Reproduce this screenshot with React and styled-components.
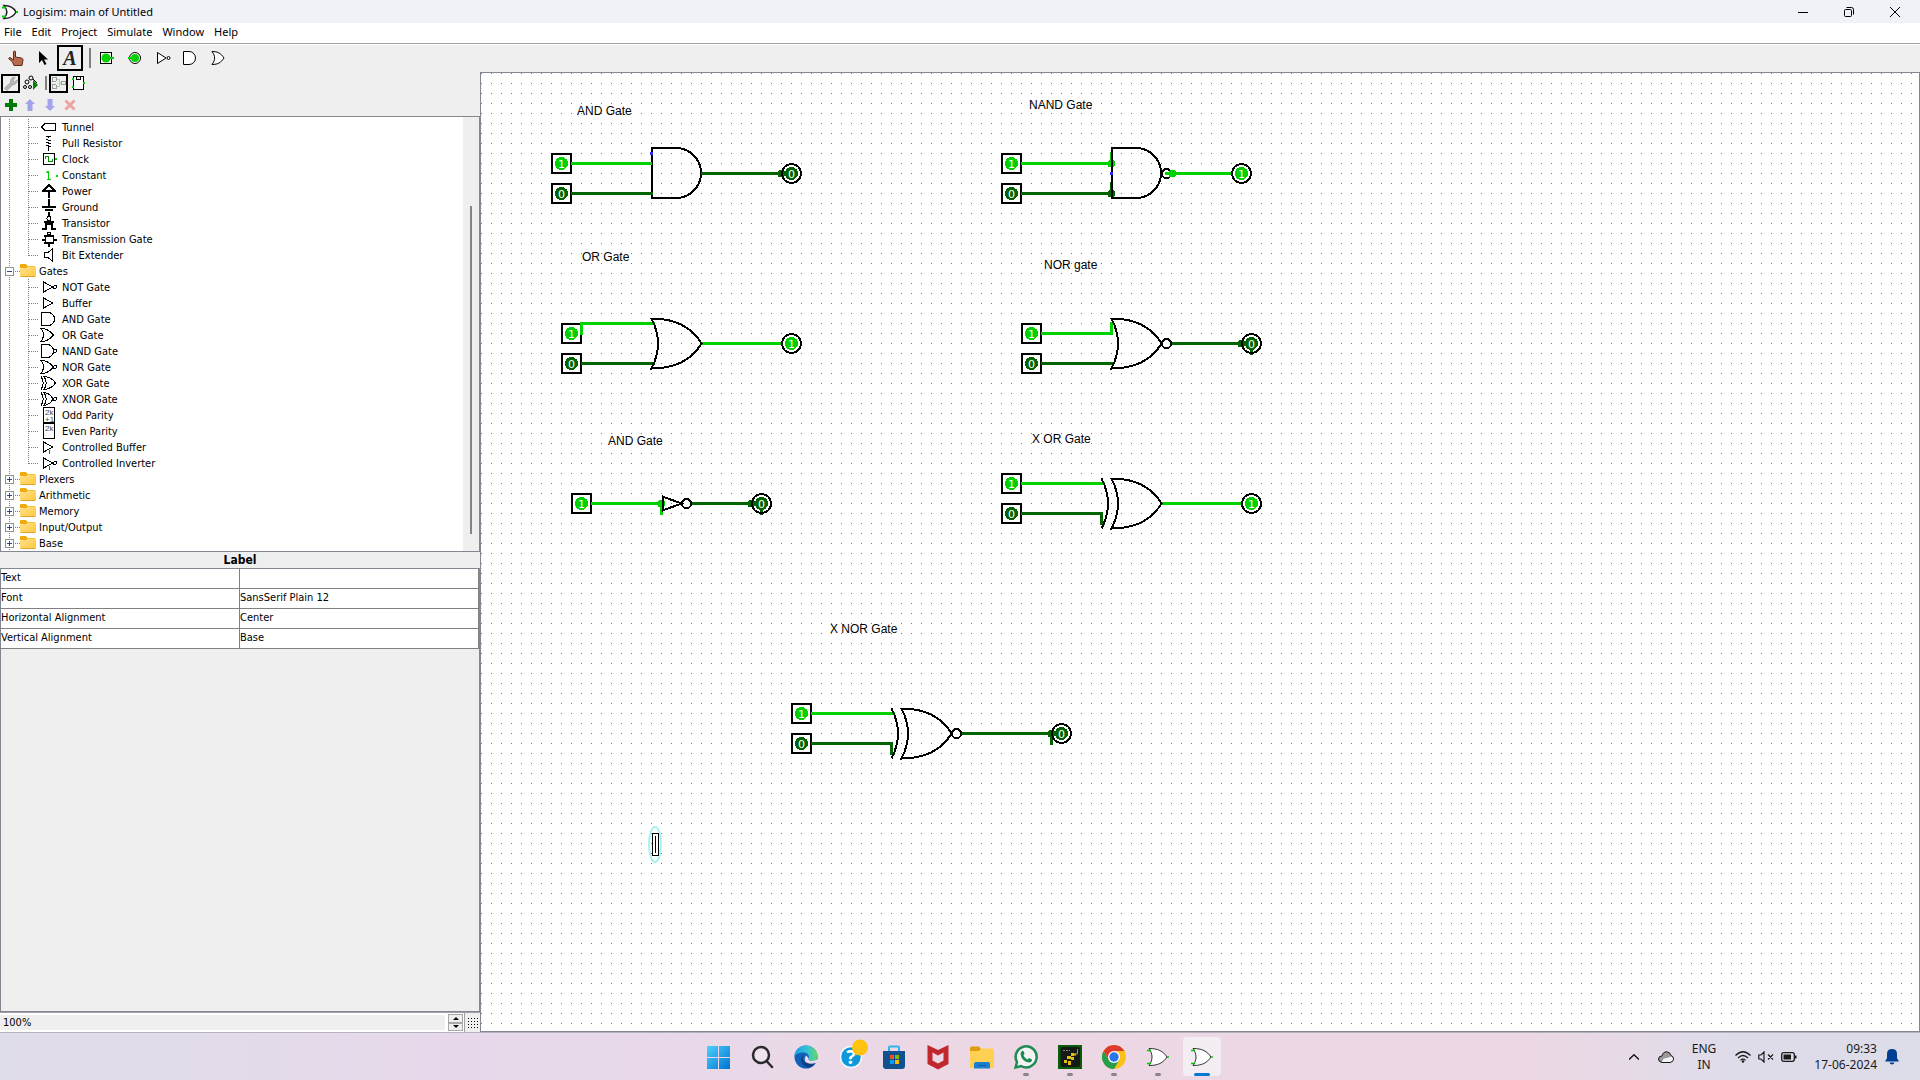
import React, { useState } from "react";
import styled, { createGlobalStyle } from "styled-components";

const ON = "#00d200";
const OFF = "#006400";
const FACE = "#efefef";
const EDGE = "#828790";
const UI_FONT = '"Noto Sans", "Open Sans", sans-serif';
const SWING_FONT = '"DejaVu Sans Condensed", "DejaVu Sans", sans-serif';

const GlobalStyle = createGlobalStyle`
  * { box-sizing: border-box; }
  html, body, #root { height: 100%; }
  body { margin: 0; overflow: hidden; background: ${FACE}; color: #000; font: 11px ${UI_FONT}; }
  button { font: inherit; color: inherit; border: 0; padding: 0; background: none; }
  svg { display: block; flex: none; }
`;

/* ---------- frame ---------- */

const Desktop = styled.div`
  height: 100%;
  display: flex;
  flex-direction: column;
`;

const TitleBar = styled.header`
  display: flex;
  align-items: center;
  height: 23px;
  padding: 0 2px;
  background: #f1f1f8;
`;

const Title = styled.h1`
  flex: 1;
  margin: 0 0 0 5px;
  font-size: 11px;
  line-height: 16px;
  font-weight: 400;
`;

const WindowButton = styled.button`
  display: grid;
  place-items: center;
  width: 46px;
  height: 20px;
`;

const MenuBar = styled.nav`
  display: flex;
  align-items: flex-start;
  gap: 10px;
  height: 21px;
  padding: 0 4px;
  background: #fff;
  border-bottom: 1px solid #a0a0a0;
`;

const MenuButton = styled.button`
  line-height: 18px;
`;

const ToolBar = styled.div`
  display: flex;
  align-items: center;
  height: 28px;
  padding: 0 3px;
  background: ${FACE};
  box-shadow: inset 0 1px #fff;
`;

const Tool = styled.button`
  display: grid;
  place-items: center;
  width: ${(p) => p.$size}px;
  height: ${(p) => p.$size}px;
  border: 2px solid ${(p) => (p.$selected ? "#000" : "transparent")};
`;

const Separator = styled.span`
  width: 2px;
  height: ${(p) => p.$height}px;
  margin: 0 ${(p) => p.$right}px 0 ${(p) => p.$left}px;
  background: #808080;
`;

const Workspace = styled.main`
  flex: 1;
  min-height: 0;
  display: flex;
`;

const SidePane = styled.aside`
  flex: none;
  width: 480px;
  display: flex;
  flex-direction: column;
  background: ${FACE};
`;

const PaneTools = styled.div`
  display: flex;
  align-items: center;
  height: 22px;
  padding: 0 1px;
`;

/* ---------- library tree ---------- */

const TreeFrame = styled.div`
  display: flex;
  height: 436px;
  border: 1px solid ${EDGE};
  background: #fff;
`;

const TreeList = styled.ul`
  flex: 1;
  margin: 0;
  padding: 2px 0 0;
  list-style: none;
  font: 11px/16px ${SWING_FONT};
`;

const TreeRow = styled.li`
  display: flex;
  height: 16px;
  padding-left: 4px;
`;

const TreeLabel = styled.span`
  padding-top: 1px;
  margin-left: ${(p) => (p.$folder ? 3 : 5)}px;
`;

const ScrollTrack = styled.div`
  display: flex;
  justify-content: center;
  width: 16px;
  padding-top: 89px;
  background: ${FACE};
`;

const ScrollThumb = styled.div`
  width: 2px;
  height: 328px;
  background: #858585;
`;

/* ---------- attributes ---------- */

const PanelTitle = styled.h2`
  margin: 0;
  padding-top: 1px;
  font: 700 12px/15px ${SWING_FONT};
  text-align: center;
`;

const AttributeArea = styled.div`
  flex: 1;
  border: 1px solid ${EDGE};
`;

const AttributeTable = styled.table`
  width: 100%;
  table-layout: fixed;
  border-collapse: separate;
  border-spacing: 0;
  background: #fff;
  font: 11px/18px ${SWING_FONT};

  th, td {
    height: 20px;
    padding: 0 0 1px;
    font-weight: 400;
    text-align: left;
    border-right: 1px solid #808080;
    border-bottom: 1px solid #808080;
  }
`;

const ZoomRow = styled.div`
  display: flex;
  height: 20px;
  border-top: 1px solid #a0a0a8;
`;

const ZoomField = styled.input`
  flex: 1;
  min-width: 0;
  padding: 0 3px;
  border: 2px solid #fff;
  border-left: 0;
  background: ${FACE};
  font: 11px ${SWING_FONT};
`;

const Spinner = styled.div`
  display: flex;
  flex-direction: column;
  width: 18px;
  padding: 1px;
  background: #fff;
  border-right: 1px solid #a0a0a8;
`;

const SpinButton = styled.button`
  flex: 1;
  display: grid;
  place-items: center;
  background: ${FACE};
  border: 1px solid #a8a8a8;
`;

const GridToggle = styled.button`
  display: grid;
  place-items: center;
  width: 15px;
`;

const CanvasFrame = styled.section`
  flex: 1;
  min-width: 0;
  border: 1px solid ${EDGE};
  background: #fff;
`;

/* ---------- taskbar ---------- */

const TaskBar = styled.footer`
  display: grid;
  grid-template-columns: 1fr 528px 1fr;
  height: 48px;
  border-top: 1px solid #b4b2bc;
  background: linear-gradient(90deg, #dfdde8 0, #e6d8ea 24%, #e9d9e8 38%, #edd7e4 52%, #ebd8e4 80%, #dfdce9 90%, #dddce9 100%);
`;

const AppStrip = styled.div`
  grid-column: 2;
  display: grid;
  grid-template-columns: repeat(12, 1fr);
  justify-items: center;
  align-items: center;
`;

const AppButton = styled.button`
  display: flex;
  flex-direction: column;
  align-items: center;
  width: 38px;
  height: 39px;
  padding-top: 8px;
  border-radius: 4px;
  background: ${(p) => (p.$active ? "#f4eef4" : "transparent")};
`;

const RunMark = styled.span`
  width: ${(p) => (p.$active ? 16 : 6)}px;
  height: 3px;
  margin-top: 4px;
  border-radius: 2px;
  background: ${(p) => (p.$active ? "#0078d4" : "#8a838b")};
`;

const Tray = styled.div`
  display: flex;
  align-items: center;
  justify-content: flex-end;
  padding-right: 16px;
  font-size: 12px;
  line-height: 16px;
  color: #1a1a1a;
`;

const TrayButton = styled.button`
  display: flex;
  align-items: center;
  gap: ${(p) => p.$gap || 0}px;
  margin-right: ${(p) => p.$after}px;
`;

const Stack = styled.span`
  display: flex;
  flex-direction: column;
  text-align: ${(p) => p.$align};
`;

/* ---------- small icons ---------- */

const Icon = ({ size = 16, children, ...rest }) => (
  <svg width={size} height={size} viewBox="0 0 16 16" fill="none" stroke="#000" aria-hidden="true" {...rest}>
    {children}
  </svg>
);

const OR_SMALL = "M1 1.500C7 1.500 10 3.500 13 8C10 12.500 7 14.500 1 14.500C4.500 10 4.500 6 1 1.500Z";

const toolIcons = {
  poke: (
    <Icon>
      <path d="M5.500 1.500q1-1 2 0V7l6 1q1.500.500 1.500 2l-1 5.500H6L4.500 12 .500 8.500q1-1.500 2.500-.500l2.500 2z" fill="#bb6a50" stroke="#5e2c1c" />
    </Icon>
  ),
  edit: (
    <Icon>
      <path d="M4 1v12l3-3 2.500 5 2-1L9 9.500h4z" fill="#000" stroke="none" />
    </Icon>
  ),
  input: (
    <Icon>
      <rect x="1.500" y="2.500" width="11" height="11" fill="#fff" shapeRendering="crispEdges" />
      <circle cx="7" cy="8" r="4.500" fill={ON} stroke="none" />
      <path d="M11 8h4" stroke={ON} strokeWidth="2" />
    </Icon>
  ),
  output: (
    <Icon>
      <circle cx="8" cy="8" r="5.500" fill="#fff" />
      <circle cx="8" cy="8" r="4" fill={ON} stroke="none" />
      <path d="M1 8h4" stroke={ON} strokeWidth="2" />
    </Icon>
  ),
  not: (
    <Icon>
      <path d="M2.500 2.500v11L11 8z" fill="#fff" />
      <circle cx="13.500" cy="8" r="1.500" fill="#fff" />
    </Icon>
  ),
  and: (
    <Icon>
      <path d="M.500 1.500H6a6.500 6.500 0 0 1 0 13H.500z" fill="#fff" />
    </Icon>
  ),
  or: (
    <Icon>
      <path d={OR_SMALL} fill="#fff" />
    </Icon>
  ),
};

const SMALL_OR_BODY = "M0 1.500C6 1.500 9 3.500 12.500 8C9 12.500 6 14.500 0 14.500C3.500 10 3.500 6 0 1.500Z";

const treeIcons = {
  tunnel: <path d="M.500 8 4 4.500h10.500v7H4z" />,
  pull: <path d="M5 1.500h5M7.500 1v2M5 4.500h2M7 5.500h3M5 7.500h3M7 8.500h3M5 10.500h3M7 11.500h3M7.500 12v4" />,
  clock: (
    <>
      <rect x="2.500" y="2.500" width="11" height="11" />
      <path d="M4 8V5.500h3.500v5H11V8" stroke="#008c00" />
      <path d="M14 8h2" stroke={ON} strokeWidth="2" />
    </>
  ),
  constant: (
    <>
      <path d="M5.500 5.500l2-1v7M5.500 12h4" stroke={ON} />
      <path d="M15 8.500h2" stroke={ON} strokeWidth="2" />
    </>
  ),
  power: (
    <>
      <path d="M8 15V8M1 8h14" strokeWidth="2" />
      <path d="M2.500 7.500 8 2l5.500 5.500" strokeWidth="1.500" />
    </>
  ),
  ground: <path d="M8 0v8M1 8h14M4 11h8M7 14h2" strokeWidth="2" />,
  transistor: (
    <>
      <path d="M1 14h4V9h6v5h4M3 7h10" strokeWidth="2" />
      <circle cx="8" cy="3.500" r="2" />
      <path d="M7 0h2" strokeWidth="2" />
    </>
  ),
  transmission: (
    <>
      <path d="M1 8.500h3M12 8.500h4M3 5h10M3 12h10M8 13v3" strokeWidth="2" />
      <rect x="4" y="5" width="8" height="7" />
      <circle cx="8" cy="2.500" r="1.500" />
    </>
  ),
  extender: <path d="M3.500 5.500H7L11.500 2v12L7 10.500H3.500z" />,
  not: (
    <>
      <path d="M2.500 3v10L12 8z" />
      <circle cx="14" cy="8" r="1.500" />
    </>
  ),
  buffer: <path d="M2.500 3v10L12 8z" />,
  and: <path d="M.500 1.500H7a6.500 6.500 0 0 1 0 13H.500z" />,
  or: <path d={SMALL_OR_BODY} />,
  nand: (
    <>
      <path d="M.500 1.500H6a6.500 6.500 0 0 1 0 13H.500z" />
      <circle cx="14" cy="8" r="1.500" />
    </>
  ),
  nor: (
    <>
      <path d={SMALL_OR_BODY} />
      <circle cx="14" cy="8" r="1.500" />
    </>
  ),
  xor: <path d="M0 1.500C3 6 3 10 0 14.500M3 1.500C8 2 12 4 14.500 8C12 12 8 14 3 14.500C6 10 6 6 3 1.500Z" />,
  xnor: (
    <>
      <path d="M0 1.500C3 6 3 10 0 14.500M3 1.500C7 2 10 4 12 8C10 12 7 14 3 14.500C6 10 6 6 3 1.500Z" />
      <circle cx="14" cy="8" r="1.500" />
    </>
  ),
  odd: (
    <>
      <rect x="2.500" y=".500" width="11" height="15" />
      <g fill="#444" stroke="none" fontSize="8" fontFamily="Liberation Sans, sans-serif">
        <text x="4" y="8">2k</text>
        <text x="4" y="15">+1</text>
      </g>
    </>
  ),
  even: (
    <>
      <rect x="2.500" y=".500" width="11" height="15" />
      <text x="4" y="8" fill="#444" stroke="none" fontSize="8" fontFamily="Liberation Sans, sans-serif">2k</text>
    </>
  ),
  cbuffer: (
    <>
      <path d="M2.500 3v10L12 8z" />
      <path d="M8.500 11v4" stroke="#008c00" />
    </>
  ),
  cinverter: (
    <>
      <path d="M2.500 3v10L12 8z" />
      <circle cx="14" cy="8" r="1.500" />
      <path d="M8.500 11v4" stroke="#008c00" />
    </>
  ),
};

const library = [
  ["Tunnel", "tunnel"], ["Pull Resistor", "pull"], ["Clock", "clock"], ["Constant", "constant"],
  ["Power", "power"], ["Ground", "ground"], ["Transistor", "transistor"],
  ["Transmission Gate", "transmission"], ["Bit Extender", "extender", "last"],
  ["Gates", "open"],
  ["NOT Gate", "not"], ["Buffer", "buffer"], ["AND Gate", "and"], ["OR Gate", "or"],
  ["NAND Gate", "nand"], ["NOR Gate", "nor"], ["XOR Gate", "xor"], ["XNOR Gate", "xnor"],
  ["Odd Parity", "odd"], ["Even Parity", "even"], ["Controlled Buffer", "cbuffer"],
  ["Controlled Inverter", "cinverter", "last"],
  ["Plexers", "closed"], ["Arithmetic", "closed"], ["Memory", "closed"],
  ["Input/Output", "closed"], ["Base", "closed"],
];

const FolderIcon = () => (
  <svg width="16" height="16" viewBox="0 0 16 16" aria-hidden="true">
    <defs>
      <linearGradient id="folder" x2="1" y2="1">
        <stop offset="0" stopColor="#ffe290" />
        <stop offset="1" stopColor="#fdc83c" />
      </linearGradient>
    </defs>
    <path d="M0 2q0-1 1-1h5l1.500 2H15v4H0z" fill="#f2a90f" />
    <path d="M0 5h6l2-1.500h7q1 0 1 1V13q0 1-1 1H1q-1 0-1-1z" fill="url(#folder)" />
    <path d="M1 13.500h14" stroke="#e5a52a" />
  </svg>
);

const FolderGuide = ({ open }) => (
  <svg width="15" height="16" shapeRendering="crispEdges" stroke="#808080" fill="none" aria-hidden="true">
    <path d="M4.500 0v16M10 8.500h5" strokeDasharray="1 1" />
    <rect x=".500" y="4.500" width="8" height="8" fill="#fff" stroke="#919191" />
    <path d={open ? "M2 8.500h5" : "M2 8.500h5M4.500 6v5"} stroke="#2b4a8c" />
  </svg>
);

const LeafGuide = ({ last }) => (
  <svg width="36" height="16" shapeRendering="crispEdges" stroke="#808080" fill="none" aria-hidden="true">
    <path d={`M4.500 0v16M23.500 0v${last ? 9 : 16}M24 8.500h10`} strokeDasharray="1 1" />
  </svg>
);

const LibraryTree = () => (
  <TreeFrame>
    <TreeList>
      {library.map(([name, kind, last]) => {
        const folder = kind === "open" || kind === "closed";
        return (
          <TreeRow key={name}>
            {folder ? <FolderGuide open={kind === "open"} /> : <LeafGuide last={last} />}
            {folder ? <FolderIcon /> : <Icon shapeRendering="crispEdges" overflow="visible">{treeIcons[kind]}</Icon>}
            <TreeLabel $folder={folder}>{name}</TreeLabel>
          </TreeRow>
        );
      })}
    </TreeList>
    <ScrollTrack>
      <ScrollThumb />
    </ScrollTrack>
  </TreeFrame>
);

/* ---------- circuit ---------- */

const Value = ({ x, y, value }) => (
  <>
    <circle cx={x + 0.5} cy={y + 0.5} r="6.500" fill={value ? ON : OFF} />
    <text x={x + 0.5} y={y + 5} fill="#fff" textAnchor="middle" fontFamily="DejaVu Sans, sans-serif" fontSize="11">
      {value}
    </text>
  </>
);

const Pin = ({ at: [x, y], value }) => (
  <g>
    <rect x={x - 9} y={y - 9} width="19" height="19" fill="#fff" stroke="#000" strokeWidth="2" />
    <Value x={x} y={y} value={value} />
  </g>
);

const Lamp = ({ at: [x, y], value }) => (
  <g>
    <circle cx={x + 0.5} cy={y + 0.5} r="9.500" fill="none" stroke="#000" strokeWidth="2" />
    <Value x={x} y={y} value={value} />
  </g>
);

const Wire = ({ d, on }) => (
  <path d={d} transform="translate(.5 .5)" fill="none" stroke={on ? ON : OFF} strokeWidth="3" strokeLinecap="square" />
);

const Dot = ({ at: [x, y], color }) => <circle cx={x + 0.5} cy={y + 0.5} r="4" fill={color} />;

const Port = ({ at: [x, y] }) => <circle cx={x + 0.5} cy={y + 0.5} r="1.500" fill="#2a2aff" />;

const Gate = ({ kind, tip: [x, y], inverted }) => (
  <g fill="none" stroke="#000" strokeWidth="2" transform={`translate(${x} ${y})`}>
    {kind === "and" && <path d="M-25-25H-49V25H-25A25 25 0 0 0-25-25Z" />}
    <g transform="translate(.5 .5)">
      {(kind === "or" || kind === "xor") && <path d="M0 0Q-15-25-50-25Q-37 0-50 25Q-15 25 0 0Z" />}
      {kind === "xor" && <path d="M-60-25Q-47 0-60 25" />}
      {kind === "not" && <path d="M0 0-19-7V7Z" />}
      {inverted && <circle cx="5" cy="0" r="4.500" />}
    </g>
  </g>
);

const captions = [
  [96, 42, "AND Gate"], [101, 188, "OR Gate"], [127, 372, "AND Gate"], [548, 36, "NAND Gate"],
  [563, 196, "NOR gate"], [551, 370, "X OR Gate"], [349, 560, "X NOR Gate"],
];

const Circuit = () => (
  <svg width="100%" height="100%" shapeRendering="crispEdges" role="img" aria-label="Logic gates">
    <defs>
      <pattern id="grid" width="10" height="10" patternUnits="userSpaceOnUse">
        <rect width="1" height="1" fill="#777" />
      </pattern>
    </defs>
    <rect width="100%" height="100%" fill="url(#grid)" />

    <Pin at={[80, 90]} value={1} />
    <Pin at={[80, 120]} value={0} />
    <Gate kind="and" tip={[220, 100]} />
    <Wire on d="M91 90H169" />
    <Wire d="M91 120H170" />
    <Wire d="M221 100H304" />
    <Dot at={[300, 100]} color={OFF} />
    <Port at={[170, 80]} />
    <Lamp at={[310, 100]} value={0} />

    <Pin at={[90, 260]} value={1} />
    <Pin at={[90, 290]} value={0} />
    <Wire on d="M100 260V250H172" />
    <Wire d="M101 290H172" />
    <Wire on d="M221 270H299" />
    <Gate kind="or" tip={[220, 270]} />
    <Lamp at={[310, 270]} value={1} />

    <Pin at={[100, 430]} value={1} />
    <Wire on d="M111 430H180V440" />
    <Dot at={[180, 430]} color={ON} />
    <Wire d="M211 430H280V440" />
    <Dot at={[270, 430]} color={OFF} />
    <Gate kind="not" tip={[200, 430]} inverted />
    <Lamp at={[280, 430]} value={0} />

    <Pin at={[530, 90]} value={1} />
    <Pin at={[530, 120]} value={0} />
    <Wire on d="M541 90H630V80" />
    <Wire d="M541 120H630V110" />
    <Dot at={[630, 90]} color={ON} />
    <Dot at={[630, 120]} color={OFF} />
    <Gate kind="and" tip={[680, 100]} inverted />
    <Port at={[630, 100]} />
    <Wire on d="M685 100H749" />
    <Dot at={[691, 100]} color={ON} />
    <Lamp at={[760, 100]} value={1} />

    <Pin at={[550, 260]} value={1} />
    <Pin at={[550, 290]} value={0} />
    <Wire on d="M561 260H630V250" />
    <Wire d="M561 290H631" />
    <Wire d="M691 270H770V280" />
    <Dot at={[760, 270]} color={OFF} />
    <Gate kind="or" tip={[680, 270]} inverted />
    <Lamp at={[770, 270]} value={0} />

    <Pin at={[530, 410]} value={1} />
    <Pin at={[530, 440]} value={0} />
    <Wire on d="M541 410H622" />
    <Wire d="M541 440H620V450H622" />
    <Wire on d="M681 430H759" />
    <Gate kind="xor" tip={[680, 430]} />
    <Lamp at={[770, 430]} value={1} />

    <Pin at={[320, 640]} value={1} />
    <Pin at={[320, 670]} value={0} />
    <Wire on d="M331 640H412" />
    <Wire d="M331 670H410V680H412" />
    <Wire d="M481 660H574M570 660V670" />
    <Dot at={[570, 660]} color={OFF} />
    <Gate kind="xor" tip={[470, 660]} inverted />
    <Lamp at={[580, 660]} value={0} />

    <g fontFamily="Liberation Sans, Arial, sans-serif" fontSize="12" fill="#000">
      {captions.map(([x, y, text]) => (
        <text key={`${x}-${y}`} x={x} y={y}>{text}</text>
      ))}
    </g>

    <g fill="none" shapeRendering="auto">
      <ellipse cx="174" cy="771.500" rx="6" ry="17.500" stroke="#a8f2f4" strokeWidth="2" />
      <rect x="171.500" y="760.500" width="6" height="22" fill="#fff" stroke="#000" />
      <path d="M174.500 763v17" stroke="#000" />
    </g>
  </svg>
);

/* ---------- taskbar icons ---------- */

const Art = ({ children }) => (
  <svg width="24" height="24" viewBox="0 0 24 24" overflow="visible" aria-hidden="true">{children}</svg>
);

const LogisimArt = () => (
  <Art>
    <path d="M3 3.500C12 3.500 17 6 21 12C17 18 12 20.500 3 20.500C7 15 7 9 3 3.500Z" fill="#fff" stroke="#333" />
    <path d="M1 5.500h4M1 18.500h4M21 12h2" stroke="#00c800" strokeWidth="1.500" />
  </Art>
);

const taskApps = [
  ["Start", "", (
    <Art>
      <defs>
        <linearGradient id="win" gradientUnits="userSpaceOnUse" x1="1" y1="1" x2="24" y2="24">
          <stop offset="0" stopColor="#4fd0fb" />
          <stop offset="1" stopColor="#0074d0" />
        </linearGradient>
      </defs>
      <path d="M1 1h11v11H1zM13 1h11v11H13zM1 13h11v11H1zM13 13h11v11H13z" fill="url(#win)" />
    </Art>
  )],
  ["Search", "", (
    <Art>
      <circle cx="11" cy="10" r="8" fill="#fff" fillOpacity=".3" stroke="#2b2b2b" strokeWidth="2.500" />
      <path d="M17 16.500 22 22" stroke="#2b2b2b" strokeWidth="2.500" strokeLinecap="round" />
    </Art>
  )],
  ["Edge", "", (
    <Art>
      <defs>
        <linearGradient id="edgeTop" x1="0" x2="1">
          <stop offset="0" stopColor="#1a9de8" />
          <stop offset=".55" stopColor="#35c1d8" />
          <stop offset="1" stopColor="#62da62" />
        </linearGradient>
      </defs>
      <circle cx="12" cy="12" r="11.500" fill="#0f62b8" />
      <path d="M.5 12C.5 5 6 .5 12 .5S23.500 5 23.500 10.500C23.500 14 21 16 18 16c-2.500 0-4-1-3.500-2.500 1.500-3-1-6-5-6C5 7.500 1.500 9 .5 12z" fill="url(#edgeTop)" />
      <path d="M9 9.500C5.500 13 7 20 13 22.500q6 0 9-6-6 3.500-11 .500-3.500-3-2-7.500z" fill="#103e84" />
      <path d="M14.500 13.500C14 15 15.500 16 18 16q3 0 4.500-2l1 2.500-2 1.500q-6 2-10-1-2-4 1-6.500z" fill="#ecdae6" />
    </Art>
  )],
  ["Get Help", "", (
    <Art>
      <circle cx="13" cy="12" r="10.500" fill="#0e98da" stroke="#f5f8fc" strokeWidth="1.500" />
      <text x="13" y="19" fill="#fff" fontFamily="Open Sans, sans-serif" fontSize="20" fontWeight="700" textAnchor="middle">?</text>
      <circle cx="22" cy="2.500" r="8" fill="#ffc20e" />
    </Art>
  )],
  ["Store", "", (
    <Art>
      <path d="M7 6V2.500q0-1 1-1h8q1 0 1 1V6" fill="none" stroke="#2fb4ee" strokeWidth="2" />
      <path d="M1 6h22v15q0 3-3 3H4q-3 0-3-3z" fill="#12508e" />
      <path d="M8 10h4v4H8z" fill="#f25022" />
      <path d="M13 10h4v4h-4z" fill="#7fba00" />
      <path d="M8 15h4v4H8z" fill="#00a4ef" />
      <path d="M13 15h4v4h-4z" fill="#ffb900" />
    </Art>
  )],
  ["McAfee", "", (
    <Art>
      <path d="M1.500 0 12 5 22.500 0V19L12 24.500 1.500 19z" fill="#c0282d" />
      <path d="M6.500 7.500 12 10.500 17.500 7.500V15.500L12 18.500 6.500 15.500z" fill="#ecd9e5" />
    </Art>
  )],
  ["File Explorer", "", (
    <Art>
      <path d="M0 3q0-1.500 1.500-1.500H9L11 4l12 1v7H0z" fill="#dd9d0c" />
      <path d="M0 6h9l2-2.500h11.500Q24 3.500 24 5v18H0z" fill="#ffd052" />
      <path d="M4 23.500V19q0-2 2-2h12q2 0 2 2v4.500z" fill="#1b7fcf" />
      <path d="M8 20.500h8" stroke="#0c5ba8" />
    </Art>
  )],
  ["WhatsApp", "running", (
    <Art>
      <path d="M1.500 22.500 3 17A10.500 10.500 0 1 1 7 21z" fill="#f3f5f3" stroke="#1f8b54" strokeWidth="2.500" />
      <path d="M7.500 6.500q1.500-1.500 2.500.500l.500 2-1 1.500q1.500 3 4 4l1.500-1.500 3 1.500q0 3-3 3-7-1-8.500-8 0-2 1-3z" fill="#1f8b54" />
    </Art>
  )],
  ["Capture", "running", (
    <Art>
      <path d="M0 0h24v24H0z" fill="#0a5c0a" />
      <rect x="2.500" y="2" width="19.500" height="20" rx="2" fill="#131a17" />
      <path d="M5 5.500h7" stroke="#888" strokeDasharray="2 1" />
      <path d="M13 8h3v3h-3zM16 8.500h2v2h-2zM9 11h4v3H9zM13 12h3v3h-3zM6 15h3v3H6zM10 16h3v4h-3z" fill="#e3bd17" />
      <path d="M19.500 4v5h-3" fill="none" stroke="#b39a20" />
    </Art>
  )],
  ["Chrome", "running", (
    <Art>
      <circle cx="12" cy="12" r="12" fill="#fbc116" />
      <path d="M1.600 6A12 12 0 0 1 22.400 6H12L6.800 15z" fill="#df3a2f" />
      <path d="M1.600 6A12 12 0 0 0 12 24L17.200 15H6.800z" fill="#259e4d" />
      <circle cx="12" cy="12" r="6" fill="#fff" />
      <circle cx="12" cy="12" r="4.700" fill="#2a74e8" />
    </Art>
  )],
  ["Logisim", "running", <LogisimArt />],
  ["Logisim: main", "active", <LogisimArt />],
];

const attributes = [
  ["Text", ""], ["Font", "SansSerif Plain 12"], ["Horizontal Alignment", "Center"], ["Vertical Alignment", "Base"],
];

const mainTools = [["Input pin", "input"], ["Output pin", "output"], ["NOT gate", "not"], ["AND gate", "and"], ["OR gate", "or"]];

export default function App() {
  const [zoom, setZoom] = useState("100%");
  return (
    <Desktop>
      <GlobalStyle />
      <TitleBar>
        <Icon>
          <path d="M2 1.500C9 1.500 12 4 14 8C12 12 9 14.500 2 14.500C6 10 6 6 2 1.500Z" fill="#fff" stroke="#222" strokeWidth="1.500" />
          <path d="M0 3.500h4M0 12.500h4M14 8h2" stroke={ON} strokeWidth="2" />
        </Icon>
        <Title>Logisim: main of Untitled</Title>
        <WindowButton aria-label="Minimize">
          <svg width="10" height="10" stroke="#000"><path d="M0 5.500h10" /></svg>
        </WindowButton>
        <WindowButton aria-label="Restore">
          <svg width="10" height="10" fill="none" stroke="#000">
            <rect x=".500" y="2.500" width="7" height="7" rx="1" />
            <path d="M2.500.500h5q2 0 2 2v5" />
          </svg>
        </WindowButton>
        <WindowButton aria-label="Close">
          <svg width="10" height="10" stroke="#000"><path d="M0 0l10 10M10 0 0 10" /></svg>
        </WindowButton>
      </TitleBar>

      <MenuBar>
        {["File", "Edit", "Project", "Simulate", "Window", "Help"].map((m) => (
          <MenuButton key={m}>{m}</MenuButton>
        ))}
      </MenuBar>

      <ToolBar>
        <Tool $size={26} aria-label="Poke">{toolIcons.poke}</Tool>
        <Tool $size={28} aria-label="Edit">{toolIcons.edit}</Tool>
        <Tool $size={26} $selected aria-label="Text">
          <Icon size={20} viewBox="0 0 20 20">
            <text x="10" y="17" fill="#222" stroke="none" fontFamily="Liberation Serif, serif" fontSize="20" fontStyle="italic" fontWeight="700" textAnchor="middle">A</text>
          </Icon>
        </Tool>
        <Separator $height={20} $left={6} $right={2} />
        {mainTools.map(([label, icon]) => (
          <Tool key={icon} $size={28} aria-label={label}>{toolIcons[icon]}</Tool>
        ))}
      </ToolBar>

      <Workspace>
        <SidePane>
          <PaneTools>
            <Tool $size={19} $selected aria-label="Show toolbox">
              <Icon size={15}>
                <path d="M1.500 13 8 7Q7.500 3 10.500 1.500l2.500 0-2 3 1.500 1.500 3-2Q15 9 10.500 9.500L4 15.500z" fill="#b4b4b4" stroke="#aaa" />
              </Icon>
            </Tool>
            <Tool $size={21} aria-label="Show simulation tree">
              <Icon>
                <circle cx="8" cy="3" r="2" />
                <circle cx="4" cy="7" r="2" />
                <circle cx="2" cy="12" r="1.500" />
                <circle cx="7" cy="12" r="1.500" />
                <path d="M10 4l4 4" />
                <path d="M10 5v10l5-5z" fill="#008000" stroke="none" />
              </Icon>
            </Tool>
            <Separator $height={14} $left={4} $right={2} />
            <Tool $size={19} $selected aria-label="Edit circuit layout">
              <Icon size={15} stroke="#999" shapeRendering="crispEdges">
                <path d="M1.500 1.500h4v4h-4zM1.500 9.500h4v4h-4zM11.500 5.500h4v4h-4z" />
                <path d="M6 3.500h3v3h2M6 11.500h3v-3h2" stroke="#9fd89f" />
              </Icon>
            </Tool>
            <Tool $size={20} aria-label="Edit circuit appearance">
              <Icon shapeRendering="crispEdges">
                <path d="M3.500 1.500h10v13h-10zM6.500 2v2h4V2" fill="#fff" />
                <path d="M2 4h2M2 12h2M13 8h2" stroke={ON} strokeWidth="2" />
              </Icon>
            </Tool>
          </PaneTools>
          <PaneTools>
            <Tool $size={19} aria-label="Add circuit">
              <Icon size={12} viewBox="0 0 12 12"><path d="M6 0v12M0 6h12" stroke="#007a00" strokeWidth="4" /></Icon>
            </Tool>
            <Tool $size={20} aria-label="Move up">
              <Icon size={12} viewBox="0 0 12 12"><path d="M6 0l5 5H8.500v7h-5V5H1z" fill="#a3a3ec" stroke="none" /></Icon>
            </Tool>
            <Tool $size={20} aria-label="Move down">
              <Icon size={12} viewBox="0 0 12 12"><path d="M6 12l5-5H8.500V0h-5v7H1z" fill="#a3a3ec" stroke="none" /></Icon>
            </Tool>
            <Tool $size={20} aria-label="Delete circuit">
              <Icon size={12} viewBox="0 0 12 12"><path d="M1.500 1.500l9 9M10.500 1.500l-9 9" stroke="#eea3a3" strokeWidth="3" /></Icon>
            </Tool>
          </PaneTools>

          <LibraryTree />

          <PanelTitle>Label</PanelTitle>
          <AttributeArea>
            <AttributeTable>
              <tbody>
                {attributes.map(([name, value]) => (
                  <tr key={name}>
                    <th scope="row">{name}</th>
                    <td>{value}</td>
                  </tr>
                ))}
              </tbody>
            </AttributeTable>
          </AttributeArea>
          <ZoomRow>
            <ZoomField aria-label="Zoom" value={zoom} onChange={(e) => setZoom(e.target.value)} />
            <Spinner>
              <SpinButton aria-label="Zoom in">
                <svg width="6" height="3"><path d="M0 3 3 0l3 3z" /></svg>
              </SpinButton>
              <SpinButton aria-label="Zoom out">
                <svg width="6" height="3"><path d="M0 0l3 3 3-3z" /></svg>
              </SpinButton>
            </Spinner>
            <GridToggle aria-label="Show grid">
              <svg width="10" height="10" shapeRendering="crispEdges" stroke="#000">
                <path d="M0 .500h10M0 3.500h10M0 6.500h10M0 9.500h10" strokeDasharray="1 2" />
              </svg>
            </GridToggle>
          </ZoomRow>
        </SidePane>
        <CanvasFrame>
          <Circuit />
        </CanvasFrame>
      </Workspace>

      <TaskBar>
        <AppStrip>
          {taskApps.map(([name, state, art]) => (
            <AppButton key={name} $active={state === "active"} aria-label={name}>
              {art}
              {state && <RunMark $active={state === "active"} />}
            </AppButton>
          ))}
        </AppStrip>
        <Tray>
          <TrayButton $after={19} aria-label="Show hidden icons">
            <svg width="10" height="6" fill="none" stroke="#1a1a1a" strokeWidth="1.500"><path d="M0 5.500 5 .800l5 4.700" /></svg>
          </TrayButton>
          <TrayButton $after={18} aria-label="OneDrive">
            <svg width="16" height="12" viewBox="0 0 16 12" stroke="#1a1a1a">
              <path d="M4 11.500Q.500 11 .500 8T4 5Q5 .800 8.500.800T13 4.500q2.500.500 2.500 3.500T12 11.500z" fill="#999" />
              <path d="M4 11Q5 6.500 9 7l4-1.500q2 .500 2 2.500t-3 3z" fill="#f4f4f4" stroke="none" />
            </svg>
          </TrayButton>
          <TrayButton $after={19}>
            <Stack $align="center"><span>ENG</span><span>IN</span></Stack>
          </TrayButton>
          <TrayButton $gap={7} $after={17} aria-label="Network, volume and battery">
            <svg width="16" height="12" viewBox="0 0 16 12" fill="none" stroke="#1a1a1a" strokeWidth="1.200">
              <path d="M.500 4.500q7.500-7.500 15 0M3 7q5-5 10 0M5.500 9.300q2.500-2.500 5 0" />
              <circle cx="8" cy="10.500" r="1.200" fill="#1a1a1a" stroke="none" />
            </svg>
            <svg width="16" height="12" viewBox="0 0 16 12" fill="none" stroke="#1a1a1a" strokeWidth="1.200">
              <path d="M.800 4H3l3-3v10L3 8H.800zM10 3.500l5 5M15 3.500l-5 5" />
            </svg>
            <svg width="16" height="12" viewBox="0 0 16 12">
              <rect x=".700" y="1.700" width="12.600" height="8.600" rx="2" fill="none" stroke="#1a1a1a" strokeWidth="1.300" />
              <path d="M2.500 3.500H10v5H2.500zM14 4.500h1.500v3H14z" fill="#1a1a1a" />
            </svg>
          </TrayButton>
          <TrayButton $gap={8} $after={5}>
            <Stack $align="right"><span>09:33</span><span>17-06-2024</span></Stack>
            <svg width="14" height="16" viewBox="0 0 14 16" fill="#003f91" aria-hidden="true">
              <path d="M7 0q5 0 5 5v4l2 3.500H0L2 9V5q0-5 5-5zM4.500 13.500h5Q9 15.500 7 15.500t-2.500-2z" />
            </svg>
          </TrayButton>
        </Tray>
      </TaskBar>
    </Desktop>
  );
}
